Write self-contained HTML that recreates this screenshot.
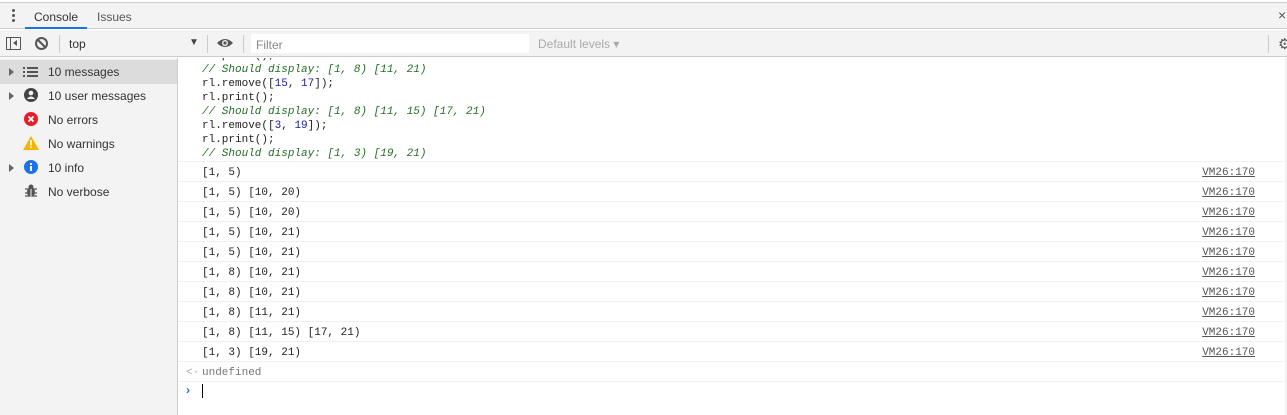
<!DOCTYPE html>
<html><head><style>
*{box-sizing:border-box;margin:0;padding:0}
body{width:1287px;height:415px;overflow:hidden;background:#fff;font-family:"Liberation Sans",sans-serif;font-size:12px;color:#333;position:relative}
.abs{position:absolute}
.mono{font-family:"Liberation Mono",monospace;font-size:11px}
.row{position:absolute;left:178px;width:1107px;height:20px;border-bottom:1px solid #f0f0f0;}
.row .t{position:absolute;left:24px;top:5px;color:#222}
.row .l{position:absolute;right:30px;top:5px;color:#555;text-decoration:underline}
.code{position:absolute;left:24px;color:#222;line-height:14px}
.c{color:#236e25;font-style:italic}
.n{color:#1a1aa6}
.side div.it{position:absolute;left:0;width:177px;height:24px;line-height:24px;padding-left:48px;color:#333}
</style></head><body>
<div class="abs" style="left:0;top:0;width:1287px;height:3px;background:#fff;border-bottom:1px solid #ccc"></div>
<div class="abs" style="left:0;top:3px;width:1287px;height:26px;background:#f3f3f3;border-bottom:1px solid #ccc"></div>
<div class="abs" style="left:12px;top:9px;width:3px;height:3px;background:#555;border-radius:50%;box-shadow:0 5px 0 #555,0 10px 0 #555"></div>
<div class="abs" style="left:34px;top:10px;color:#333">Console</div>
<div class="abs" style="left:25px;top:27px;width:62px;height:2px;background:#1a73e8"></div>
<div class="abs" style="left:97px;top:10px;color:#555">Issues</div>
<div class="abs" style="left:1278px;top:7px;color:#555;font-size:14px">×</div>
<div class="abs" style="left:0;top:30px;width:1287px;height:27px;background:#f3f3f3;border-bottom:1px solid #ccc"></div>
<div class="abs" style="left:6px;top:37px;width:15px;height:13px;border:1px solid #555"></div>
<div class="abs" style="left:10px;top:37px;width:1px;height:13px;background:#555"></div>
<div class="abs" style="left:13px;top:40px;width:0;height:0;border-top:3.5px solid transparent;border-bottom:3.5px solid transparent;border-right:4px solid #555"></div>
<svg class="abs" style="left:34px;top:36px" width="15" height="15"><circle cx="7.5" cy="7.5" r="5.5" fill="none" stroke="#555" stroke-width="2"/><line x1="3.5" y1="3.5" x2="11.5" y2="11.5" stroke="#555" stroke-width="2"/></svg>
<div class="abs" style="left:59px;top:35px;width:1px;height:18px;background:#ccc"></div>
<div class="abs" style="left:69px;top:37px;color:#333">top</div>
<div class="abs" style="left:189px;top:37px;color:#444;font-size:10px">▼</div>
<div class="abs" style="left:207px;top:35px;width:1px;height:18px;background:#ccc"></div>
<svg class="abs" style="left:216px;top:37px" width="18" height="12"><path d="M1 6 Q9 -2 17 6 Q9 14 1 6Z" fill="#555"/><circle cx="9" cy="6" r="3" fill="#f3f3f3"/><circle cx="9" cy="6" r="1.6" fill="#555"/></svg>
<div class="abs" style="left:243px;top:35px;width:1px;height:18px;background:#ccc"></div>
<div class="abs" style="left:251px;top:34px;width:278px;height:19px;background:#fff"></div>
<div class="abs" style="left:256px;top:38px;color:#888">Filter</div>
<div class="abs" style="left:538px;top:37px;color:#aaa">Default levels ▾</div>
<div class="abs" style="left:1268px;top:35px;width:1px;height:18px;background:#ccc"></div>
<div class="abs" style="left:1278px;top:35px;color:#555;font-size:15px">⚙</div>
<div class="abs side" style="left:0;top:58px;width:178px;height:357px;background:#f3f3f3;border-right:1px solid #ccc">
<div class="it" style="top:2px;background:#dcdcdc">10 messages</div>
<div class="it" style="top:26px">10 user messages</div>
<div class="it" style="top:50px">No errors</div>
<div class="it" style="top:74px">No warnings</div>
<div class="it" style="top:98px">10 info</div>
<div class="it" style="top:122px">No verbose</div>
</div>
<div class="abs" style="left:9px;top:68px;border-top:4px solid transparent;border-bottom:4px solid transparent;border-left:5px solid #666"></div>
<div class="abs" style="left:9px;top:92px;border-top:4px solid transparent;border-bottom:4px solid transparent;border-left:5px solid #666"></div>
<div class="abs" style="left:9px;top:164px;border-top:4px solid transparent;border-bottom:4px solid transparent;border-left:5px solid #666"></div>
<svg class="abs" style="left:23px;top:66px" width="15" height="11"><g fill="#555"><rect x="0" y="1" width="2" height="2"/><rect x="4" y="1" width="11" height="2"/><rect x="0" y="5" width="2" height="2"/><rect x="4" y="5" width="11" height="2"/><rect x="0" y="9" width="2" height="2"/><rect x="4" y="9" width="11" height="2"/></g></svg>
<svg class="abs" style="left:24px;top:88px" width="14" height="14"><circle cx="7" cy="7" r="7" fill="#444"/><circle cx="7" cy="5" r="2.3" fill="#f3f3f3"/><path d="M3 11 Q7 6 11 11Z" fill="#f3f3f3"/></svg>
<svg class="abs" style="left:24px;top:112px" width="14" height="14"><circle cx="7" cy="7" r="7" fill="#e41e2b"/><path d="M4.5 4.5L9.5 9.5M9.5 4.5L4.5 9.5" stroke="#fff" stroke-width="1.8"/></svg>
<svg class="abs" style="left:23px;top:136px" width="16" height="14"><path d="M8 0L16 14H0Z" fill="#f4b400"/><rect x="7.2" y="4" width="1.6" height="5.5" fill="#fff"/><rect x="7.2" y="10.5" width="1.6" height="1.6" fill="#fff"/></svg>
<svg class="abs" style="left:24px;top:160px" width="14" height="14"><circle cx="7" cy="7" r="7" fill="#1a73e8"/><rect x="6" y="6" width="2" height="5" fill="#fff"/><rect x="6" y="3" width="2" height="2" fill="#fff"/></svg>
<svg class="abs" style="left:25px;top:184px" width="12" height="14"><ellipse cx="6" cy="8" rx="4" ry="5" fill="#555"/><circle cx="6" cy="3" r="2.5" fill="#555"/><path d="M0 5h12M0 9h12M0 12h12" stroke="#555" stroke-width="1.2"/><path d="M6 5v8" stroke="#f3f3f3" stroke-width="1"/></svg>
<div class="abs" style="left:178px;top:58px;width:1107px;height:104px;border-bottom:1px solid #f0f0f0;overflow:hidden">
<div class="code mono" style="top:-9px">rl.print();<br><span class="c">// Should display: [1, 8) [11, 21)</span><br>rl.remove([<span class="n">15</span>, <span class="n">17</span>]);<br>rl.print();<br><span class="c">// Should display: [1, 8) [11, 15) [17, 21)</span><br>rl.remove([<span class="n">3</span>, <span class="n">19</span>]);<br>rl.print();<br><span class="c">// Should display: [1, 3) [19, 21)</span></div>
</div>
<div class="row mono" style="top:162px"><span class="t">[1, 5)</span><span class="l">VM26:170</span></div>
<div class="row mono" style="top:182px"><span class="t">[1, 5) [10, 20)</span><span class="l">VM26:170</span></div>
<div class="row mono" style="top:202px"><span class="t">[1, 5) [10, 20)</span><span class="l">VM26:170</span></div>
<div class="row mono" style="top:222px"><span class="t">[1, 5) [10, 21)</span><span class="l">VM26:170</span></div>
<div class="row mono" style="top:242px"><span class="t">[1, 5) [10, 21)</span><span class="l">VM26:170</span></div>
<div class="row mono" style="top:262px"><span class="t">[1, 8) [10, 21)</span><span class="l">VM26:170</span></div>
<div class="row mono" style="top:282px"><span class="t">[1, 8) [10, 21)</span><span class="l">VM26:170</span></div>
<div class="row mono" style="top:302px"><span class="t">[1, 8) [11, 21)</span><span class="l">VM26:170</span></div>
<div class="row mono" style="top:322px"><span class="t">[1, 8) [11, 15) [17, 21)</span><span class="l">VM26:170</span></div>
<div class="row mono" style="top:342px"><span class="t">[1, 3) [19, 21)</span><span class="l">VM26:170</span></div>
<div class="row mono" style="top:362px"><span class="abs" style="left:8px;top:5px;color:#aaa">&lt;·</span><span class="t" style="color:#777">undefined</span></div>
<div class="abs" style="left:186px;top:383px;color:#1a73e8;font-weight:bold;font-size:12px">›</div>
<div class="abs" style="left:202px;top:384px;width:1px;height:14px;background:#000"></div>
<div class="abs" style="left:1285px;top:58px;width:2px;height:357px;background:#f3f3f3"></div>
</body></html>
